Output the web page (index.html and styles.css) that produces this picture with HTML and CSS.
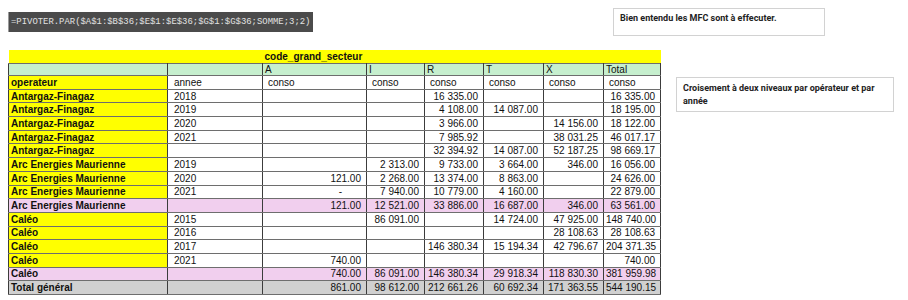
FILE: index.html
```html
<!DOCTYPE html>
<html lang="fr">
  <head>
    <meta charset="UTF-8" />
    <title>Pivot par opérateur</title>
    <link rel="stylesheet" href="styles.css">
  </head>
  <body>
    <div class="sheet">
      <div class="top">
        <div class="formula"><span class="formula-text">=PIVOTER.PAR($A$1:$B$36;$E$1:$E$36;$G$1:$G$36;SOMME;3;2)</span></div>
        <div class="note note-mfc">Bien entendu les MFC sont à effecuter.</div>
      </div>

      <div class="main">
        <table class="pivot">
          <colgroup>
            <col class="c-op" />
            <col class="c-year" />
            <col class="c-a" />
            <col class="c-i" />
            <col class="c-r" />
            <col class="c-t" />
            <col class="c-x" />
            <col class="c-tot" />
          </colgroup>
          <thead>
            <tr class="title-row">
              <th colspan="2"></th>
              <th colspan="6">code_grand_secteur</th>
            </tr>
            <tr class="code-row">
              <td></td>
              <td></td>
              <td>A</td>
              <td>I</td>
              <td>R</td>
              <td>T</td>
              <td>X</td>
              <td>Total</td>
            </tr>
            <tr class="head-row">
              <td class="op">operateur</td>
              <td class="year">annee</td>
              <td class="lbl">conso</td>
              <td class="lbl">conso</td>
              <td class="lbl">conso</td>
              <td class="lbl">conso</td>
              <td class="lbl">conso</td>
              <td class="lbl">conso</td>
            </tr>
          </thead>
          <tbody id="pivot-body"></tbody>
        </table>

        <div class="note note-cross">Croisement à deux niveaux par opérateur et par année</div>
      </div>
    </div>

    <script>
      // operateur, annee, A, I, R, T, X, Total, row type
      const rows = [
        ["Antargaz-Finagaz", "2018", "", "", "16 335.00", "", "", "16 335.00"],
        ["Antargaz-Finagaz", "2019", "", "", "4 108.00", "14 087.00", "", "18 195.00"],
        ["Antargaz-Finagaz", "2020", "", "", "3 966.00", "", "14 156.00", "18 122.00"],
        ["Antargaz-Finagaz", "2021", "", "", "7 985.92", "", "38 031.25", "46 017.17"],
        ["Antargaz-Finagaz", "", "", "", "32 394.92", "14 087.00", "52 187.25", "98 669.17"],
        ["Arc Energies Maurienne", "2019", "", "2 313.00", "9 733.00", "3 664.00", "346.00", "16 056.00"],
        ["Arc Energies Maurienne", "2020", "121.00", "2 268.00", "13 374.00", "8 863.00", "", "24 626.00"],
        ["Arc Energies Maurienne", "2021", "-", "7 940.00", "10 779.00", "4 160.00", "", "22 879.00"],
        ["Arc Energies Maurienne", "", "121.00", "12 521.00", "33 886.00", "16 687.00", "346.00", "63 561.00", "sub"],
        ["Caléo", "2015", "", "86 091.00", "", "14 724.00", "47 925.00", "148 740.00"],
        ["Caléo", "2016", "", "", "", "", "28 108.63", "28 108.63"],
        ["Caléo", "2017", "", "", "146 380.34", "15 194.34", "42 796.67", "204 371.35"],
        ["Caléo", "2021", "740.00", "", "", "", "", "740.00"],
        ["Caléo", "", "740.00", "86 091.00", "146 380.34", "29 918.34", "118 830.30", "381 959.98", "sub"],
        ["Total général", "", "861.00", "98 612.00", "212 661.26", "60 692.34", "171 363.55", "544 190.15", "grand"]
      ];

      const body = document.getElementById("pivot-body");
      rows.forEach((r) => {
        const tr = document.createElement("tr");
        if (r[8]) tr.className = r[8];
        let html = `<td class="op">${r[0]}</td><td class="year">${r[1]}</td>`;
        for (let i = 2; i < 8; i++) {
          const cls = r[i] === "-" ? "num dash" : "num";
          html += `<td class="${cls}">${r[i]}</td>`;
        }
        tr.innerHTML = html;
        body.appendChild(tr);
      });
    </script>
  </body>
</html>
```

FILE: styles.css
```css
body {
  margin: 0;
  font-family: "Liberation Sans", Arial, sans-serif;
  background: #fff;
}
.sheet {
  padding: 8px 0 0 8px;
}
.top {
  display: flex;
  align-items: flex-start;
  height: 42px;
}
.formula {
  margin-top: 4px;
  width: 305px;
  height: 20px;
  box-sizing: border-box;
  padding-left: 2px;
  background-color: #4b4b4b;
  border-left: 1px solid #9a9a9a;
  color: #e2e2e2;
  font-family: "Liberation Mono", monospace;
  font-size: 9px;
  line-height: 20px;
  white-space: nowrap;
  overflow: hidden;
}
.formula-text {
  display: inline-block;
  transform: scaleX(0.99);
  transform-origin: left center;
}
.note {
  box-sizing: border-box;
  border: 1px solid #d2d2d2;
  background: #fff;
  font-family: Roboto, sans-serif;
  font-weight: 700;
  font-size: 9px;
  line-height: 13px;
  color: #222;
  padding: 3px 6px;
}
.note-mfc {
  margin-left: 300px;
  width: 212px;
  height: 28px;
}
.main {
  display: flex;
  align-items: flex-start;
}
.note-cross {
  margin-left: 15px;
  margin-top: 27px;
  width: 218px;
  height: 35px;
  padding-top: 4px;
}

/* pivot table */
.pivot {
  border-collapse: collapse;
  table-layout: fixed;
  width: 652px;
  font-size: 10px;
  color: #111;
}
.c-op { width: 159px; }
.c-year { width: 95px; }
.c-a { width: 104px; }
.c-i { width: 58px; }
.c-r { width: 59px; }
.c-t { width: 60px; }
.c-x { width: 60px; }
.c-tot { width: 57px; }

.pivot td,
.pivot th {
  padding: 0 2px;
  height: 12.7px;
  line-height: 11px;
  white-space: nowrap;
  overflow: hidden;
  border: 1px solid #6e6e6e;
  border-left-color: #3c3c3c;
  border-right-color: #3c3c3c;
}
.title-row th {
  background-color: #ffff00;
  border: none;
  height: 13px;
  text-align: left;
  font-weight: bold;
}
.code-row td {
  background-color: #c6efce;
  height: 11px;
  text-align: left;
}
.head-row .lbl {
  padding-left: 5px;
}
.op {
  background-color: #ffff00;
  font-weight: bold;
}
.year {
  padding-left: 6px !important;
}
.num {
  text-align: right;
  padding-right: 5px !important;
}
.num.dash {
  padding-right: 24px !important;
}
.sub td {
  background-color: #f1cfee;
}
.grand td {
  background-color: #d0d0d0;
}
```
